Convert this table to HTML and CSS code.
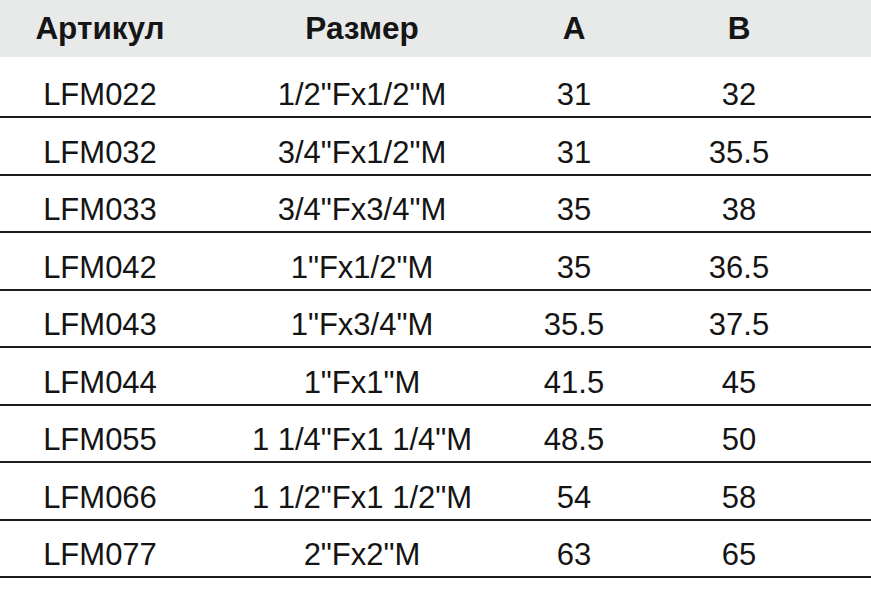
FILE: index.html
```html
<!DOCTYPE html>
<html lang="ru">
<head>
<meta charset="utf-8">
<title>Таблица размеров</title>
<link rel="stylesheet" href="styles.css">
</head>
<body>
<div class="table">
  <div class="row head">
    <div class="cell">Артикул</div>
    <div class="cell">Размер</div>
    <div class="cell">A</div>
    <div class="cell">B</div>
  </div>
  <div class="body">
    <div class="row"><div class="cell">LFM022</div><div class="cell">1/2"Fx1/2"M</div><div class="cell">31</div><div class="cell">32</div></div>
    <div class="row"><div class="cell">LFM032</div><div class="cell">3/4"Fx1/2"M</div><div class="cell">31</div><div class="cell">35.5</div></div>
    <div class="row"><div class="cell">LFM033</div><div class="cell">3/4"Fx3/4"M</div><div class="cell">35</div><div class="cell">38</div></div>
    <div class="row"><div class="cell">LFM042</div><div class="cell">1"Fx1/2"M</div><div class="cell">35</div><div class="cell">36.5</div></div>
    <div class="row"><div class="cell">LFM043</div><div class="cell">1"Fx3/4"M</div><div class="cell">35.5</div><div class="cell">37.5</div></div>
    <div class="row"><div class="cell">LFM044</div><div class="cell">1"Fx1"M</div><div class="cell">41.5</div><div class="cell">45</div></div>
    <div class="row"><div class="cell">LFM055</div><div class="cell">1 1/4"Fx1 1/4"M</div><div class="cell">48.5</div><div class="cell">50</div></div>
    <div class="row"><div class="cell">LFM066</div><div class="cell">1 1/2"Fx1 1/2"M</div><div class="cell">54</div><div class="cell">58</div></div>
    <div class="row"><div class="cell">LFM077</div><div class="cell">2"Fx2"M</div><div class="cell">63</div><div class="cell">65</div></div>
  </div>
</div>
</body>
</html>
```
FILE: styles.css
```css
html, body {
  margin: 0;
  padding: 0;
  background: #ffffff;
}
body {
  font-family: "Liberation Sans", Arial, sans-serif;
  color: #141414;
  width: 871px;
  height: 592px;
  overflow: hidden;
}
.table {
  display: flex;
  flex-direction: column;
}
.row {
  display: grid;
  grid-template-columns: 200px 324px 100px 230px 1fr;
  align-items: end;
}
.cell {
  text-align: center;
  white-space: nowrap;
}
.head {
  height: 57px;
  background: #e8eae9;
  font-weight: bold;
  font-size: 31.5px;
  line-height: 31px;
  color: #151515;
}
.head .cell {
  padding-bottom: 13px;
}
.body {
  margin-top: 3.5px;
  display: flex;
  flex-direction: column;
}
.body .row {
  height: 57.5px;
  box-sizing: border-box;
  border-bottom: 2px solid #1c1c1c;
  font-size: 31px;
  line-height: 31px;
}
.body .cell {
  padding-bottom: 6px;
}
```
